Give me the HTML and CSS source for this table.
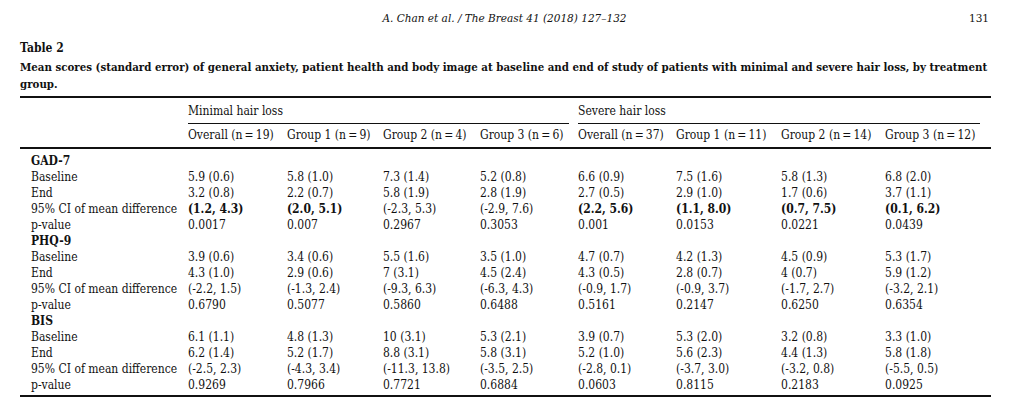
FILE: index.html
```html
<!DOCTYPE html>
<html lang="en">
<head>
<meta charset="utf-8">
<title>Table 2</title>
<link rel="stylesheet" href="styles.css">
</head>
<body>
<div class="page">
  <header class="running-head">
    <span class="rh-spacer"></span>
    <span class="rh-title">A. Chan et al. / The Breast 41 (2018) 127–132</span>
    <span class="rh-page">131</span>
  </header>

  <div class="caption">
    <div class="cap-label">Table 2</div>
    <div class="cap-text">Mean scores (standard error) of general anxiety, patient health and body image at baseline and end of study of patients with minimal and severe hair loss, by treatment group.</div>
  </div>

  <table class="tbl">
    <colgroup>
      <col class="c-label">
      <col class="c1"><col class="c2"><col class="c3"><col class="c4">
      <col class="c5"><col class="c6"><col class="c7"><col class="c8">
    </colgroup>
    <thead>
      <tr class="grp">
        <th></th>
        <th colspan="4"><div class="span-line span-min">Minimal hair loss</div></th>
        <th colspan="4"><div class="span-line span-sev">Severe hair loss</div></th>
      </tr>
      <tr class="cols">
        <th></th>
        <th>Overall (n&#8201;=&#8201;19)</th>
        <th>Group 1 (n&#8201;=&#8201;9)</th>
        <th>Group 2 (n&#8201;=&#8201;4)</th>
        <th>Group 3 (n&#8201;=&#8201;6)</th>
        <th>Overall (n&#8201;=&#8201;37)</th>
        <th>Group 1 (n&#8201;=&#8201;11)</th>
        <th>Group 2 (n&#8201;=&#8201;14)</th>
        <th>Group 3 (n&#8201;=&#8201;12)</th>
      </tr>
    </thead>
    <tbody>
      <tr class="sec first"><td class="lbl">GAD-7</td><td></td><td></td><td></td><td></td><td></td><td></td><td></td><td></td></tr>
      <tr><td class="lbl">Baseline</td><td>5.9 (0.6)</td><td>5.8 (1.0)</td><td>7.3 (1.4)</td><td>5.2 (0.8)</td><td>6.6 (0.9)</td><td>7.5 (1.6)</td><td>5.8 (1.3)</td><td>6.8 (2.0)</td></tr>
      <tr><td class="lbl">End</td><td>3.2 (0.8)</td><td>2.2 (0.7)</td><td>5.8 (1.9)</td><td>2.8 (1.9)</td><td>2.7 (0.5)</td><td>2.9 (1.0)</td><td>1.7 (0.6)</td><td>3.7 (1.1)</td></tr>
      <tr><td class="lbl">95% CI of mean difference</td><td class="b">(1.2, 4.3)</td><td class="b">(2.0, 5.1)</td><td>(-2.3, 5.3)</td><td>(-2.9, 7.6)</td><td class="b">(2.2, 5.6)</td><td class="b">(1.1, 8.0)</td><td class="b">(0.7, 7.5)</td><td class="b">(0.1, 6.2)</td></tr>
      <tr><td class="lbl">p-value</td><td>0.0017</td><td>0.007</td><td>0.2967</td><td>0.3053</td><td>0.001</td><td>0.0153</td><td>0.0221</td><td>0.0439</td></tr>

      <tr class="sec"><td class="lbl">PHQ-9</td><td></td><td></td><td></td><td></td><td></td><td></td><td></td><td></td></tr>
      <tr><td class="lbl">Baseline</td><td>3.9 (0.6)</td><td>3.4 (0.6)</td><td>5.5 (1.6)</td><td>3.5 (1.0)</td><td>4.7 (0.7)</td><td>4.2 (1.3)</td><td>4.5 (0.9)</td><td>5.3 (1.7)</td></tr>
      <tr><td class="lbl">End</td><td>4.3 (1.0)</td><td>2.9 (0.6)</td><td>7 (3.1)</td><td>4.5 (2.4)</td><td>4.3 (0.5)</td><td>2.8 (0.7)</td><td>4 (0.7)</td><td>5.9 (1.2)</td></tr>
      <tr><td class="lbl">95% CI of mean difference</td><td>(-2.2, 1.5)</td><td>(-1.3, 2.4)</td><td>(-9.3, 6.3)</td><td>(-6.3, 4.3)</td><td>(-0.9, 1.7)</td><td>(-0.9, 3.7)</td><td>(-1.7, 2.7)</td><td>(-3.2, 2.1)</td></tr>
      <tr><td class="lbl">p-value</td><td>0.6790</td><td>0.5077</td><td>0.5860</td><td>0.6488</td><td>0.5161</td><td>0.2147</td><td>0.6250</td><td>0.6354</td></tr>

      <tr class="sec"><td class="lbl">BIS</td><td></td><td></td><td></td><td></td><td></td><td></td><td></td><td></td></tr>
      <tr><td class="lbl">Baseline</td><td>6.1 (1.1)</td><td>4.8 (1.3)</td><td>10 (3.1)</td><td>5.3 (2.1)</td><td>3.9 (0.7)</td><td>5.3 (2.0)</td><td>3.2 (0.8)</td><td>3.3 (1.0)</td></tr>
      <tr><td class="lbl">End</td><td>6.2 (1.4)</td><td>5.2 (1.7)</td><td>8.8 (3.1)</td><td>5.8 (3.1)</td><td>5.2 (1.0)</td><td>5.6 (2.3)</td><td>4.4 (1.3)</td><td>5.8 (1.8)</td></tr>
      <tr><td class="lbl">95% CI of mean difference</td><td>(-2.5, 2.3)</td><td>(-4.3, 3.4)</td><td>(-11.3, 13.8)</td><td>(-3.5, 2.5)</td><td>(-2.8, 0.1)</td><td>(-3.7, 3.0)</td><td>(-3.2, 0.8)</td><td>(-5.5, 0.5)</td></tr>
      <tr class="last"><td class="lbl">p-value</td><td>0.9269</td><td>0.7966</td><td>0.7721</td><td>0.6884</td><td>0.0603</td><td>0.8115</td><td>0.2183</td><td>0.0925</td></tr>
    </tbody>
  </table>
</div>
</body>
</html>
```

FILE: styles.css
```css
html, body {
  margin: 0;
  padding: 0;
  background: #ffffff;
}

body {
  font-family: "DejaVu Serif", "Liberation Serif", serif;
  font-size: 12px;
  font-stretch: condensed;
  color: #111111;
}

.page {
  width: 971px;
  margin-left: 20px;
  padding-top: 11px;
}

.running-head {
  display: grid;
  grid-template-columns: 1fr auto 1fr;
  align-items: center;
  line-height: 14px;
  height: 14px;
  font-size: 10.5px;
  font-stretch: normal;
  padding-right: 2px;
}

.rh-title {
  font-style: italic;
}

.rh-page {
  justify-self: end;
}

.caption {
  margin-top: 15px;
  font-weight: bold;
  line-height: 17px;
}

.cap-label {
  margin-bottom: 2px;
}

.cap-text {
  font-size: 11.4px;
}

.tbl {
  margin-top: 3px;
  width: 971px;
  table-layout: fixed;
  border-collapse: collapse;
  border-top: 2px solid #111111;
  border-bottom: 2px solid #111111;
}

.c-label { width: 168px; }
.c1 { width: 99px; }
.c2 { width: 96px; }
.c3 { width: 97px; }
.c4 { width: 98px; }
.c5 { width: 98px; }
.c6 { width: 105px; }
.c7 { width: 104px; }
.c8 { width: 106px; }

.tbl th,
.tbl td {
  padding: 0;
  text-align: left;
  font-weight: normal;
  white-space: nowrap;
  vertical-align: top;
}

.span-line {
  line-height: 14px;
  padding: 6px 0 5px;
  border-bottom: 1px solid #111111;
}

.span-min { margin-right: 9px; }
.span-sev { margin-right: 11px; }

.cols {
  border-bottom: 2px solid #111111;
}

.cols th {
  line-height: 14px;
  padding: 4px 0 5px;
}

.tbl td {
  line-height: 16px;
}

.tbl td.lbl {
  padding-left: 11px;
}

.sec td.lbl,
.tbl td.b {
  font-weight: bold;
}

.first td {
  padding-top: 4px;
}

.last td {
  padding-bottom: 2px;
}
```
